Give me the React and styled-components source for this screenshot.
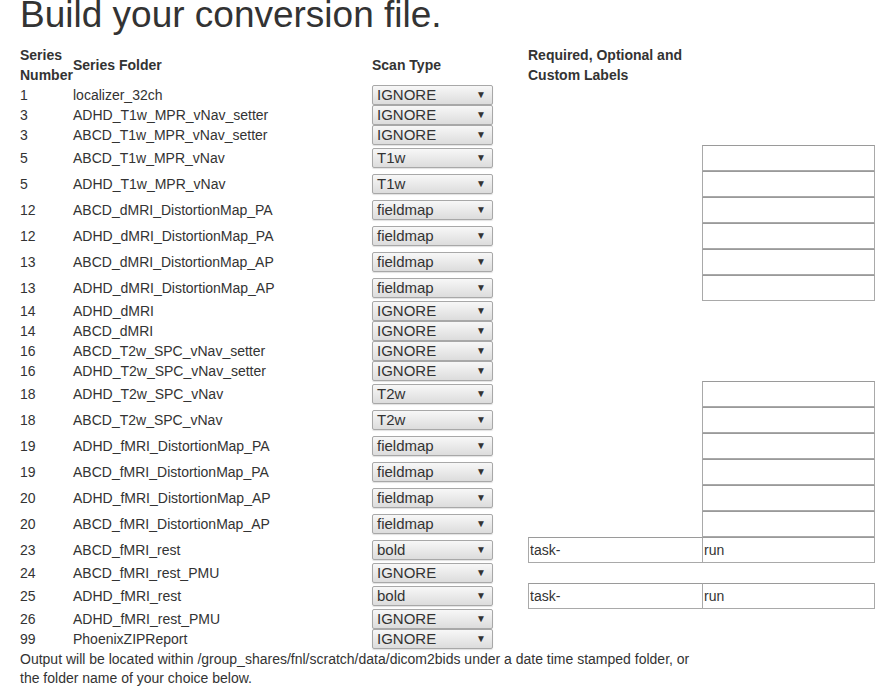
import styled, { createGlobalStyle } from "styled-components";

const GlobalStyle = createGlobalStyle`
  body {
    margin: 0;
    background: #fff;
    font-family: "Liberation Sans", Arial, sans-serif;
    font-size: 14px;
    line-height: 20px;
    color: #333;
  }
`;

const rows = [
  { no: "1", folder: "localizer_32ch", type: "IGNORE" },
  { no: "3", folder: "ADHD_T1w_MPR_vNav_setter", type: "IGNORE" },
  { no: "3", folder: "ABCD_T1w_MPR_vNav_setter", type: "IGNORE" },
  { no: "5", folder: "ABCD_T1w_MPR_vNav", type: "T1w", custom: true },
  { no: "5", folder: "ADHD_T1w_MPR_vNav", type: "T1w", custom: true },
  { no: "12", folder: "ABCD_dMRI_DistortionMap_PA", type: "fieldmap", custom: true },
  { no: "12", folder: "ADHD_dMRI_DistortionMap_PA", type: "fieldmap", custom: true },
  { no: "13", folder: "ABCD_dMRI_DistortionMap_AP", type: "fieldmap", custom: true },
  { no: "13", folder: "ADHD_dMRI_DistortionMap_AP", type: "fieldmap", custom: true },
  { no: "14", folder: "ADHD_dMRI", type: "IGNORE" },
  { no: "14", folder: "ABCD_dMRI", type: "IGNORE" },
  { no: "16", folder: "ABCD_T2w_SPC_vNav_setter", type: "IGNORE" },
  { no: "16", folder: "ADHD_T2w_SPC_vNav_setter", type: "IGNORE" },
  { no: "18", folder: "ADHD_T2w_SPC_vNav", type: "T2w", custom: true },
  { no: "18", folder: "ABCD_T2w_SPC_vNav", type: "T2w", custom: true },
  { no: "19", folder: "ADHD_fMRI_DistortionMap_PA", type: "fieldmap", custom: true },
  { no: "19", folder: "ABCD_fMRI_DistortionMap_PA", type: "fieldmap", custom: true },
  { no: "20", folder: "ADHD_fMRI_DistortionMap_AP", type: "fieldmap", custom: true },
  { no: "20", folder: "ABCD_fMRI_DistortionMap_AP", type: "fieldmap", custom: true },
  { no: "23", folder: "ABCD_fMRI_rest", type: "bold", task: true },
  { no: "24", folder: "ABCD_fMRI_rest_PMU", type: "IGNORE" },
  { no: "25", folder: "ADHD_fMRI_rest", type: "bold", task: true },
  { no: "26", folder: "ADHD_fMRI_rest_PMU", type: "IGNORE" },
  { no: "99", folder: "PhoenixZIPReport", type: "IGNORE" },
];

const Page = styled.div`
  padding: 0 20px;
`;

// page is scrolled a few px, so the heading sits slightly above the top edge
const Title = styled.h1`
  margin: -5px 0 10px;
  font-size: 37px;
  line-height: 40px;
  font-weight: 400;
  color: #333;
`;

const Table = styled.table`
  border-collapse: collapse;
  table-layout: fixed;
  width: 856px;
`;

const Head = styled.th`
  width: ${(p) => p.w}px;
  height: 40px;
  padding: 0;
  text-align: left;
  vertical-align: middle;
  font-weight: 700;
  line-height: 20px;
`;

const Row = styled.tr`
  height: ${(p) => (p.tall ? 26 : 20)}px;
`;

const Cell = styled.td`
  padding: 0;
  vertical-align: middle;
  white-space: nowrap;
  line-height: 20px;
`;

const Select = styled.div`
  box-sizing: border-box;
  width: 121px;
  height: 20px;
  display: flex;
  align-items: center;
  justify-content: space-between;
  padding: 0 6px 0 4px;
  border: 1px solid #a8a8a8;
  border-radius: 2px;
  background: linear-gradient(#f7f7f7, #dcdcdc);
  box-shadow: 0 1px 1px rgba(0, 0, 0, 0.12);
  font-size: 15px;
  color: #333;
`;

const Arrow = styled.span`
  font-size: 10px;
  color: #333;
  line-height: 1;
`;

const Field = styled.input`
  display: block;
  box-sizing: border-box;
  width: ${(p) => p.w || 174}px;
  height: 26px;
  margin: 0;
  padding: 0 1px;
  border: 1px solid #a9a9a9;
  border-top-color: #9a9a9a;
  font-family: inherit;
  font-size: 14px;
  color: #333;
  background: #fff;
`;

const Note = styled.p`
  margin: 1px 0 0;
  max-width: 692px;
  line-height: 19px;
`;

export default function App() {
  return (
    <Page>
      <GlobalStyle />
      <Title>Build your conversion file.</Title>
      <Table>
        <thead>
          <tr>
            <Head w={53}>Series Number</Head>
            <Head w={299}>Series Folder</Head>
            <Head w={156}>Scan Type</Head>
            <Head w={174}>Required, Optional and Custom Labels</Head>
            <Head w={174}></Head>
          </tr>
        </thead>
        <tbody>
          {rows.map((r, i) => (
            <Row key={i} tall={r.custom || r.task}>
              <Cell>{r.no}</Cell>
              <Cell>{r.folder}</Cell>
              <Cell>
                <Select>
                  {r.type}
                  <Arrow>▼</Arrow>
                </Select>
              </Cell>
              <Cell>{r.task && <Field w={175} defaultValue="task-" />}</Cell>
              <Cell>
                {r.task && <Field w={173} defaultValue="run" />}
                {r.custom && <Field w={173} />}
              </Cell>
            </Row>
          ))}
        </tbody>
      </Table>
      <Note>
        Output will be located within /group_shares/fnl/scratch/data/dicom2bids under a date time stamped folder, or the folder name of your choice below.
      </Note>
    </Page>
  );
}
